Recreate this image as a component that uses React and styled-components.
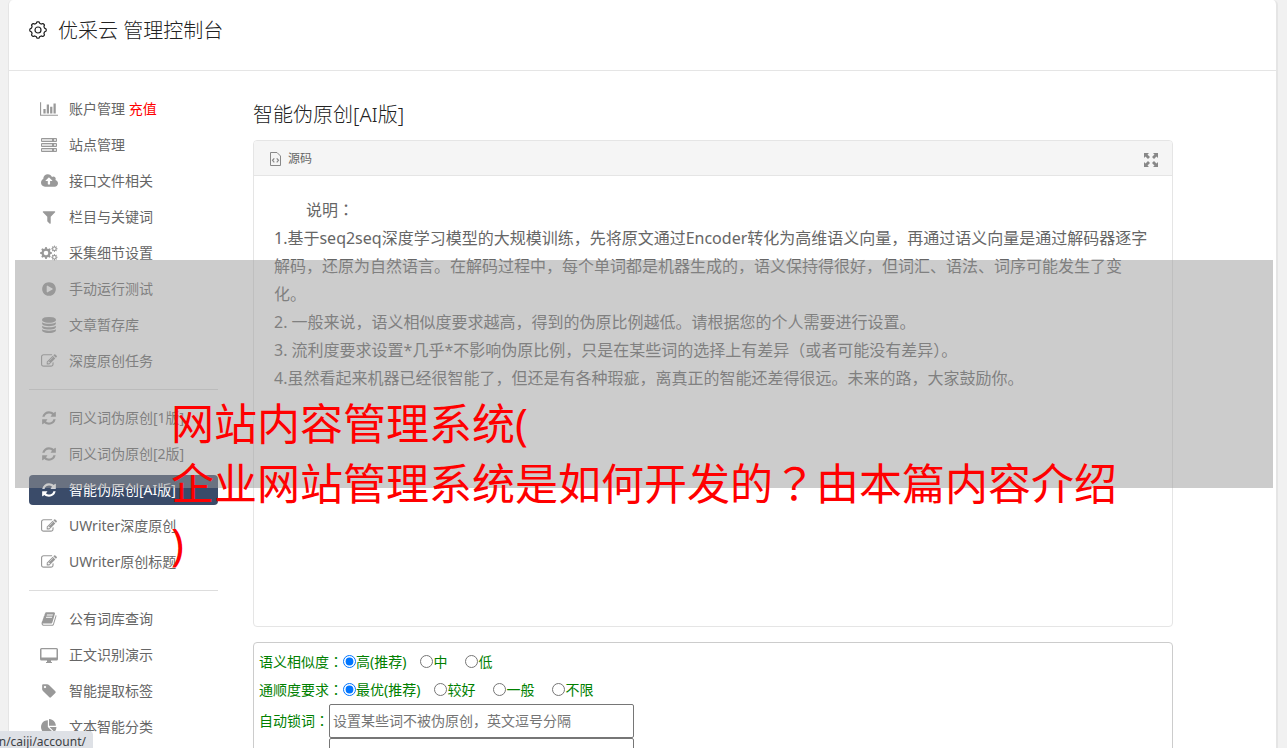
import React from "react";
import styled, { createGlobalStyle } from "styled-components";

const GlobalStyle = createGlobalStyle`
  * { box-sizing: border-box; }
  body {
    margin: 0;
    background: #f1f1f1;
    color: #666;
    font: 14px/20px "Noto Sans", "Noto Sans CJK SC", sans-serif;
  }
  h1, h2, p, ul, form { margin: 0; padding: 0; }
`;

const Page = styled.div`
  position: relative;
  height: 100vh;
  overflow: hidden;
  padding: 0 9px 0 8px;
`;

const Shell = styled.div`
  min-height: 100%;
  background: #fff;
  border: solid #e5e5e5;
  border-width: 0 2px 0 1px;
  border-radius: 5px 5px 0 0;
`;

const Header = styled.header`
  display: flex;
  align-items: center;
  gap: 11px;
  height: 71px;
  padding: 0 20px 10px;
  border-bottom: 1px solid #e5e5e5;
  color: #222;
`;

const Title = styled.h1`
  padding-top: 2px;
  font-size: 20px;
  line-height: 28px;
  font-weight: 300;
`;

const Columns = styled.div`
  display: flex;
  align-items: flex-start;
  gap: 35px;
  padding: 23px 103px 0 20px;
`;

const Sidebar = styled.nav`
  flex: 0 0 189px;
`;

const Menu = styled.ul`
  display: flex;
  flex-direction: column;
  gap: 6px;
  list-style: none;
`;

const Divider = styled.li`
  height: 1px;
  margin: 7px 0;
  background: #ddd;
`;

const MenuLink = styled.a`
  display: flex;
  align-items: center;
  gap: 10px;
  height: 30px;
  padding-left: 10px;
  border-radius: 4px;
  white-space: nowrap;
  text-decoration: none;
  color: ${(p) => (p.$active ? "#fff" : "#666")};
  background: ${(p) => (p.$active ? "#3a4b69" : "transparent")};
`;

const IconSlot = styled.span`
  display: flex;
  justify-content: center;
  width: 20px;
  color: ${(p) => (p.$active ? "#fff" : "#999")};
`;

const Recharge = styled.span`
  color: #f00;
`;

const Main = styled.main`
  flex: 1;
  min-width: 0;
`;

const Heading = styled.h2`
  padding-top: 4px;
  margin-bottom: 8px;
  font-size: 20px;
  line-height: 34px;
  font-weight: 300;
  color: #222;
`;

const Panel = styled.section`
  min-height: 487px;
  border: 1px solid #e5e5e5;
  border-radius: 4px;
`;

const PanelBar = styled.div`
  display: flex;
  align-items: center;
  gap: 6px;
  height: 35px;
  padding: 2px 14px 0 15px;
  border-bottom: 1px solid #e5e5e5;
  border-radius: 3px 3px 0 0;
  background: #f5f5f5;
  font-size: 12px;
`;

const ExpandButton = styled.button`
  display: flex;
  margin-left: auto;
  padding: 2px 0 0;
  border: 0;
  background: none;
  color: #888;
`;

const Article = styled.div`
  padding: 20px;
  font-size: 16px;
  line-height: 28px;
`;

const Lead = styled.p`
  text-indent: 2em;
`;

const Mid = styled.span`
  font-family: "Noto Sans CJK TC", sans-serif;
  line-height: 1;
`;

const Options = styled.form`
  margin-top: 15px;
  padding: 5px;
  border: 1px solid #ccc;
  border-radius: 4px;
  color: #008000;
`;

const OptionRow = styled.fieldset`
  display: flex;
  align-items: center;
  height: 28px;
  margin: 0;
  padding: 0;
  border: 0;
`;

const Choice = styled.label`
  display: flex;
  align-items: center;
  margin-right: ${(p) => (p.$first ? 14 : 18)}px;
`;

const Radio = styled.input`
  width: 13px;
  height: 13px;
  margin: 0 0 2px;
`;

const FieldRow = styled.div`
  display: flex;
  align-items: center;
`;

const FieldLabel = styled.label`
  width: 70px;
`;

const Field = styled.input`
  width: 305px;
  height: 34px;
  padding: 0 3px 2px;
  border: 1px solid #767676;
  border-radius: 2px;
  font: inherit;
  &::placeholder { color: #757575; }
`;

const Band = styled.div`
  position: absolute;
  top: 260px;
  left: 15px;
  right: 14px;
  height: 228px;
  background: rgba(153, 153, 153, 0.5);
`;

const Caption = styled.p`
  position: absolute;
  top: 394px;
  left: 171px;
  font-size: 43px;
  line-height: 60px;
  white-space: nowrap;
  color: #f00;
`;

const StatusBubble = styled.div`
  position: absolute;
  left: 0;
  bottom: 0;
  display: flex;
  justify-content: flex-end;
  width: 93px;
  height: 17px;
  padding: 2px 7px 0 0;
  overflow: hidden;
  border-radius: 0 4px 0 0;
  background: #dee1e6;
  color: #3c4043;
  font-size: 12px;
  line-height: 17px;
  white-space: nowrap;
`;

const Glyph = ({ d, width = 1792, size = 16 }) => (
  <svg width={Math.round((width / 1792) * size)} height={size} viewBox={`0 0 ${width} 1792`} fill="currentColor" fillRule="evenodd" aria-hidden="true">
    <path d={d} />
  </svg>
);

const PATHS = {
  chart: "M640 896v512h-256v-512h256zm384-512v1024h-256v-1024h256zm1024 1152v128h-2048v-1536h128v1408h1920zm-640-896v768h-256v-768h256zm384-384v1152h-256v-1152h256z",
  cloud: "M1280 864q0-14-9-23l-352-352q-9-9-23-9t-23 9l-351 351q-10 12-10 24 0 14 9 23t23 9h224v352q0 13 9.5 22.5t22.5 9.5h192q13 0 22.5-9.5t9.5-22.5v-352h224q13 0 22.5-9.5t9.5-22.5zm640 288q0 159-112.5 271.5t-271.5 112.5h-1088q-185 0-316.5-131.5t-131.5-316.5q0-130 70-240t188-165q-2-30-2-43 0-212 150-362t362-150q156 0 285.5 87t188.5 231q71-62 166-62 106 0 181 75t75 181q0 76-41 138 130 31 213.5 135.5t83.5 238.5z",
  filter: "M1595 295q17 41-14 70l-493 493v742q0 42-39 59-13 5-25 5-27 0-45-19l-256-256q-19-19-19-45v-486l-493-493q-31-29-14-70 17-39 59-39h1280q42 0 59 39z",
  play: "M896 128q209 0 385.5 103t279.5 279.5 103 385.5-103 385.5-279.5 279.5-385.5 103-385.5-103-279.5-279.5-103-385.5 103-385.5 279.5-279.5 385.5-103zm384 823q32-18 32-55t-32-55l-544-320q-31-19-64-1-32 19-32 56v640q0 37 32 56 16 8 32 8 17 0 32-9z",
  database: "M896 768q237 0 443-43t325-127v170q0 69-103 128t-280 93.5-385 34.5-385-34.5-280-93.5-103-128v-170q119 84 325 127t443 43zm0 768q237 0 443-43t325-127v170q0 69-103 128t-280 93.5-385 34.5-385-34.5-280-93.5-103-128v-170q119 84 325 127t443 43zm0-384q237 0 443-43t325-127v170q0 69-103 128t-280 93.5-385 34.5-385-34.5-280-93.5-103-128v-170q119 84 325 127t443 43zm0-1152q208 0 385 34.5t280 93.5 103 128v128q0 69-103 128t-280 93.5-385 34.5-385-34.5-280-93.5-103-128v-128q0-69 103-128t280-93.5 385-34.5z",
  edit: "M888 1184l116-116-152-152-116 116v56h96v96h56zm440-720q-16-16-33 1l-350 350q-17 17-1 33t33-1l350-350q17-17 1-33zm80 594v190q0 119-84.5 203.5t-203.5 84.5h-832q-119 0-203.5-84.5t-84.5-203.5v-832q0-119 84.5-203.5t203.5-84.5h832q63 0 117 25 15 7 18 23 3 17-9 29l-49 49q-14 14-32 8-23-6-45-6h-832q-66 0-113 47t-47 113v832q0 66 47 113t113 47h832q66 0 113-47t47-113v-126q0-13 9-22l64-64q15-15 35-7t20 29zm-96-738l288 288-672 672h-288v-288zm444 132l-92 92-288-288 92-92q28-28 68-28t68 28l152 152q28 28 28 68t-28 68z",
  refresh: "M1639 1056q0 5-1 7-64 268-268 434.5t-478 166.5q-146 0-282.5-55t-243.5-157l-129 129q-19 19-45 19t-45-19-19-45v-448q0-26 19-45t45-19h448q26 0 45 19t19 45-19 45l-137 137q71 66 161 102t187 36q134 0 250-65t186-179q11-17 53-117 8-23 30-23h192q13 0 22.5 9.5t9.5 22.5zm25-800v448q0 26-19 45t-45 19h-448q-26 0-45-19t-19-45 19-45l138-138q-148-137-349-137-134 0-250 65t-186 179q-11 17-53 117-8 23-30 23h-199q-13 0-22.5-9.5t-9.5-22.5v-7q65-268 270-434.5t480-166.5q146 0 284 55.5t245 156.5l130-129q19-19 45-19t45 19 19 45z",
  book: "M1703 478q40 57 18 129l-275 906q-19 64-76.5 107.5t-122.5 43.5h-923q-77 0-148.5-53.5t-99.5-131.5q-24-67-2-127 0-4 3-27t4-37q1-8-3-21.5t-3-19.5q2-11 8-21t16.5-23.5 16.5-23.5q23-38 45-91.5t30-91.5q3-10 .5-30t-.5-28q3-11 17-28t17-23q21-36 42-92t25-90q1-9-2.5-32t.5-28q4-13 22-30.5t22-22.5q19-26 42.5-84.5t27.5-96.5q1-8-3-25.5t-2-26.5q2-8 9-18t18-23 17-21q8-12 16.5-30.5t15-35 16-36 19.5-32 26.5-23.5 36-11.5 47.5 5.5l-1 3q38-9 51-9h761q74 0 114 56t18 130l-274 906q-36 119-71.5 153.5t-128.5 34.5h-869q-27 0-38 15-11 16-1 43 24 70 144 70h923q29 0 56-15.5t35-41.5l300-987q7-22 5-57 38 15 59 43zm-1064 2q-4 13 2 22.5t20 9.5h608q13 0 25.5-9.5t16.5-22.5l21-64q4-13-2-22.5t-20-9.5h-608q-13 0-25.5 9.5t-16.5 22.5zm-83 256q-4 13 2 22.5t20 9.5h608q13 0 25.5-9.5t16.5-22.5l21-64q4-13-2-22.5t-20-9.5h-608q-13 0-25.5 9.5t-16.5 22.5z",
  tag: "M576 448q0-53-37.5-90.5t-90.5-37.5-90.5 37.5-37.5 90.5 37.5 90.5 90.5 37.5 90.5-37.5 37.5-90.5zm1067 576q0 53-37 90l-491 492q-39 37-91 37-53 0-90-37l-715-716q-38-37-64.5-101t-26.5-117v-416q0-52 38-90t90-38h416q53 0 117 26.5t102 64.5l715 714q37 39 37 91z",
  pie: "M768 890l546 546q-106 108-247.5 168t-298.5 60q-209 0-385.5-103t-279.5-279.5-103-385.5 103-385.5 279.5-279.5 385.5-103v762zm187 6h773q0 157-60 298.5t-168 247.5zm709-128h-768v-768q209 0 385.5 103t279.5 279.5 103 385.5z",
};

const ServerIcon = () => (
  <svg width="16" height="14" viewBox="0 0 16 14" aria-hidden="true">
    {[0, 5, 10].map((y) => (
      <g key={y}>
        <rect x="0" y={y} width="16" height="4" rx="1" fill="currentColor" />
        <rect x="1" y={y + 1} width="10" height="2" fill="#ddd" />
        <rect x="13" y={y + 1} width="2" height="2" fill="#ddd" />
      </g>
    ))}
  </svg>
);

const DesktopIcon = () => (
  <svg width="18" height="15" viewBox="0 0 18 15" fill="currentColor" fillRule="evenodd" aria-hidden="true">
    <path d="M1.5 0h15A1.5 1.5 0 0 1 18 1.500v9.500a1.500 1.500 0 0 1-1.500 1.500H11v1.500h1v1H6v-1h1v-1.500H1.500A1.500 1.500 0 0 1 0 11V1.500A1.500 1.500 0 0 1 1.500 0zM1.500 1.200v8.300h15V1.200z" />
  </svg>
);

// Closed toothed outline: the radius swings between r - depth and r + depth.
const gear = (cx, cy, r, depth) => {
  const points = [];
  for (let i = 0; i < 144; i += 1) {
    const a = (i / 144) * Math.PI * 2;
    const wave = Math.max(-1, Math.min(1, Math.cos(a * 8) * 1.8));
    const d = r + wave * depth;
    points.push(`${(cx + d * Math.sin(a)).toFixed(2)} ${(cy - d * Math.cos(a)).toFixed(2)}`);
  }
  return `M${points.join("L")}Z`;
};

const ring = (cx, cy, r) => `M${cx - r} ${cy}a${r} ${r} 0 1 0 ${2 * r} 0a${r} ${r} 0 1 0 ${-2 * r} 0z`;

const CogsIcon = () => (
  <svg width="18" height="16" viewBox="0 0 18 16" fill="currentColor" fillRule="evenodd" aria-hidden="true">
    <path d={gear(6, 8, 5.2, 0.7) + ring(6, 8, 2.3)} />
    <path d={gear(14.4, 3.8, 2.7, 0.5) + ring(14.4, 3.8, 1.2)} />
    <path d={gear(14.4, 12.2, 2.7, 0.5) + ring(14.4, 12.2, 1.2)} />
  </svg>
);

const GearIcon = () => (
  <svg width="18" height="18" viewBox="0 0 18 18" fill="none" stroke="currentColor" strokeWidth="1.2" strokeLinejoin="round" aria-hidden="true">
    <path d={gear(9, 9, 7.5, 0.7)} />
    <circle cx="9" cy="9" r="3" />
  </svg>
);

const SourceIcon = () => (
  <svg width="13" height="14" viewBox="0 0 13 14" fill="none" stroke="#888" aria-hidden="true">
    <path d="M1.500.500h6.500l3.500 3.500v9.500h-10z" />
    <path d="M5.300 6.300L3.500 8.300l1.800 2M7.700 6.300l1.800 2-1.800 2" strokeWidth="1.200" />
  </svg>
);

const ExpandIcon = () => (
  <svg width="14" height="14" viewBox="0 0 14 14" fill="currentColor" aria-hidden="true">
    {[0, 90, 180, 270].map((turn) => (
      <path key={turn} transform={`rotate(${turn} 7 7)`} d="M0 0h5L3.500 1.500 6 4 4 6 1.500 3.500 0 5z" />
    ))}
  </svg>
);

const glyph = (name, width) => <Glyph d={PATHS[name]} width={width} />;

const MENU = [
  [
    { icon: glyph("chart", 2048), label: "账户管理", extra: "充值" },
    { icon: <ServerIcon />, label: "站点管理" },
    { icon: glyph("cloud", 1920), label: "接口文件相关" },
    { icon: glyph("filter"), label: "栏目与关键词" },
    { icon: <CogsIcon />, label: "采集细节设置" },
    { icon: glyph("play"), label: "手动运行测试" },
    { icon: glyph("database"), label: "文章暂存库" },
    { icon: glyph("edit"), label: "深度原创任务" },
  ],
  [
    { icon: glyph("refresh"), label: "同义词伪原创[1版]" },
    { icon: glyph("refresh"), label: "同义词伪原创[2版]" },
    { icon: glyph("refresh"), label: "智能伪原创[AI版]", active: true },
    { icon: glyph("edit"), label: "UWriter深度原创" },
    { icon: glyph("edit"), label: "UWriter原创标题" },
  ],
  [
    { icon: glyph("book"), label: "公有词库查询" },
    { icon: <DesktopIcon />, label: "正文识别演示" },
    { icon: glyph("tag"), label: "智能提取标签" },
    { icon: glyph("pie"), label: "文本智能分类" },
  ],
];

const NOTES = [
  "1.基于seq2seq深度学习模型的大规模训练，先将原文通过Encoder转化为高维语义向量，再通过语义向量是通过解码器逐字解码，还原为自然语言。在解码过程中，每个单词都是机器生成的，语义保持得很好，但词汇、语法、词序可能发生了变化。",
  "2. 一般来说，语义相似度要求越高，得到的伪原比例越低。请根据您的个人需要进行设置。",
  "3. 流利度要求设置*几乎*不影响伪原比例，只是在某些词的选择上有差异（或者可能没有差异）。",
  "4.虽然看起来机器已经很智能了，但还是有各种瑕疵，离真正的智能还差得很远。未来的路，大家鼓励你。",
];

const RADIO_ROWS = [
  { name: "similarity", label: "语义相似度", choices: ["高(推荐)", "中", "低"] },
  { name: "fluency", label: "通顺度要求", choices: ["最优(推荐)", "较好", "一般", "不限"] },
];

export default function App() {
  return (
    <Page>
      <GlobalStyle />
      <Shell>
        <Header>
          <GearIcon />
          <Title>优采云 管理控制台</Title>
        </Header>
        <Columns>
          <Sidebar>
            <Menu>
              {MENU.map((group, g) => (
                <React.Fragment key={g}>
                  {g > 0 && <Divider role="separator" />}
                  {group.map((item) => (
                    <li key={item.label}>
                      <MenuLink href="#" $active={item.active}>
                        <IconSlot $active={item.active}>{item.icon}</IconSlot>
                        <span>
                          {item.label}
                          {item.extra && <Recharge> {item.extra}</Recharge>}
                        </span>
                      </MenuLink>
                    </li>
                  ))}
                </React.Fragment>
              ))}
            </Menu>
          </Sidebar>
          <Main>
            <Heading>智能伪原创[AI版]</Heading>
            <Panel>
              <PanelBar>
                <SourceIcon />
                <span>源码</span>
                <ExpandButton type="button" aria-label="全屏">
                  <ExpandIcon />
                </ExpandButton>
              </PanelBar>
              <Article>
                <Lead>说明<Mid>：</Mid></Lead>
                {NOTES.map((note) => (
                  <p key={note}>{note}</p>
                ))}
              </Article>
            </Panel>
            <Options>
              {RADIO_ROWS.map((row) => (
                <OptionRow key={row.name} aria-label={row.label}>
                  <span>{row.label}<Mid>：</Mid></span>
                  {row.choices.map((choice, i) => (
                    <Choice key={choice} $first={i === 0}>
                      <Radio type="radio" name={row.name} defaultChecked={i === 0} />
                      {choice}
                    </Choice>
                  ))}
                </OptionRow>
              ))}
              <FieldRow>
                <FieldLabel htmlFor="locked">自动锁词<Mid>：</Mid></FieldLabel>
                <Field id="locked" type="text" placeholder="设置某些词不被伪原创，英文逗号分隔" />
              </FieldRow>
              <FieldRow>
                <FieldLabel htmlFor="extra" />
                <Field id="extra" type="text" />
              </FieldRow>
            </Options>
          </Main>
        </Columns>
      </Shell>
      <Band />
      <Caption>
        网站内容管理系统(
        <br />
        企业网站管理系统是如何开发的<Mid>？</Mid>由本篇内容介绍
        <br />)
      </Caption>
      <StatusBubble>n/caiji/account/</StatusBubble>
    </Page>
  );
}
